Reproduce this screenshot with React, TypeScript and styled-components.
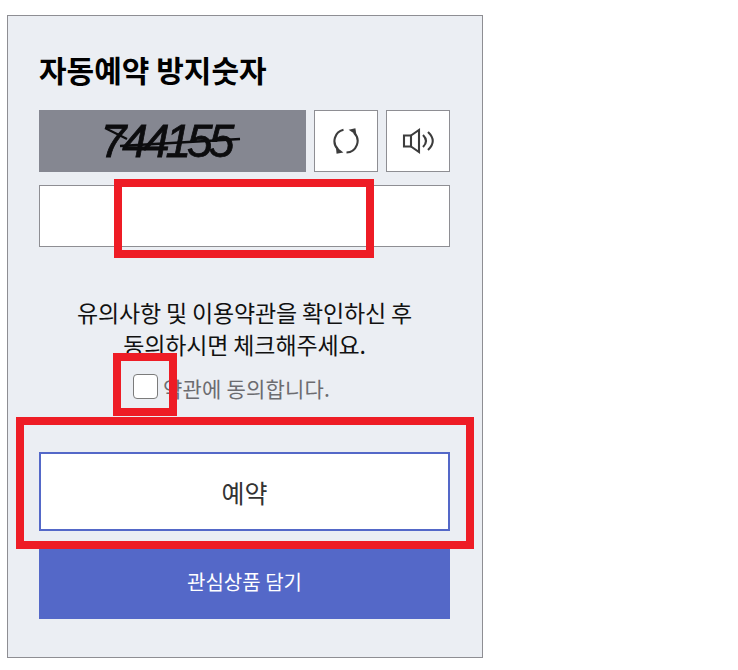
import React from 'react';
import styled, { createGlobalStyle } from 'styled-components';

const GlobalStyle = createGlobalStyle`
  html, body {
    margin: 0;
    padding: 0;
    background: #fff;
    font-family: "Noto Sans CJK KR", "Noto Sans", sans-serif;
  }
`;

const Page = styled.div`
  position: relative;
  width: 738px;
  height: 670px;
  padding: 15px 0 0 7px;
  box-sizing: border-box;
  overflow: hidden;
`;

const Panel = styled.section`
  width: 476px;
  height: 643px;
  box-sizing: border-box;
  padding: 29px 32px 0 31px;
  background: #ebeef3;
  border: 1px solid #8e8e93;
  display: flex;
  flex-direction: column;
`;

const Title = styled.h2`
  margin: 0;
  height: 48px;
  line-height: 48px;
  font-size: 30px;
  font-weight: 700;
  color: #000;
`;

const CaptchaRow = styled.div`
  display: flex;
  gap: 8px;
  margin-top: 17px;
  height: 62px;
`;

const CaptchaImage = styled.div`
  position: relative;
  width: 267px;
  background: #858791;
  display: flex;
  align-items: center;
  justify-content: center;
`;

const CaptchaDigits = styled.span`
  font-family: "Liberation Sans", sans-serif;
  font-style: italic;
  font-size: 46px;
  letter-spacing: -4px;
  line-height: 62px;
  color: #0c0c0e;
  -webkit-text-stroke: 0.8px #0c0c0e;
  filter: blur(0.5px);
  margin-right: 14px;
`;

const CaptchaStrikes = styled.svg`
  position: absolute;
  left: 0;
  top: 0;
`;

const IconButton = styled.button`
  width: 64px;
  padding: 0;
  box-sizing: border-box;
  background: #fff;
  border: 1px solid #8e8e93;
  display: flex;
  align-items: center;
  justify-content: center;
`;

const CodeInput = styled.input`
  display: block;
  width: 411px;
  height: 62px;
  margin-top: 13px;
  box-sizing: border-box;
  background: #fff;
  border: 1px solid #8e8e93;
`;

const Notice = styled.p`
  margin: 49px 0 0;
  font-size: 23px;
  line-height: 32px;
  text-align: center;
  color: #111;
  letter-spacing: -0.15px;
`;

const AgreeRow = styled.label`
  display: flex;
  align-items: center;
  justify-content: center;
  gap: 5px;
  height: 26px;
  margin-top: 13px;
  margin-right: 26px;
  font-size: 21px;
  letter-spacing: 0.2px;
  color: #6c6c70;
`;

const AgreeText = styled.span`
  margin-top: 3px;
`;

const AgreeBox = styled.span`
  width: 25px;
  height: 25px;
  box-sizing: border-box;
  background: #fff;
  border: 1px solid #7b7b7b;
  border-radius: 4px;
`;

const ReserveButton = styled.button`
  display: block;
  width: 411px;
  height: 79px;
  margin-top: 53px;
  padding: 0;
  box-sizing: border-box;
  background: #fff;
  border: 2px solid #5468c8;
  font-family: inherit;
  font-size: 25px;
  color: #333;
`;

const WishButton = styled.button`
  display: block;
  width: 411px;
  height: 70px;
  margin-top: 18px;
  padding: 0 0 5px;
  border: none;
  background: #5468c8;
  font-family: inherit;
  font-size: 20px;
  color: #fff;
`;

const Marker = styled.div<{ $left: number; $top: number; $width: number; $height: number }>`
  position: absolute;
  left: ${({ $left }) => $left}px;
  top: ${({ $top }) => $top}px;
  width: ${({ $width }) => $width}px;
  height: ${({ $height }) => $height}px;
  box-sizing: border-box;
  border: 8px solid #ee1c25;
`;

const RefreshIcon = () => (
  <svg width="28" height="28" viewBox="0 0 28 28" fill="none" stroke="#3c3c3c" strokeWidth="2.1">
    <path d="M11.5 2.8 A11.5 11.5 0 0 0 6 22.3" />
    <path d="M14.5 25.5 A11.5 11.5 0 0 0 22 5.7" />
    <path d="M3.8 19.5 L4.6 26.8 L11.4 25.4 Z" fill="#3c3c3c" stroke="none" />
    <path d="M24.4 8 L23.4 1.2 L16.6 2.8 Z" fill="#3c3c3c" stroke="none" />
  </svg>
);

const SpeakerIcon = () => (
  <svg width="32" height="28" viewBox="0 0 32 28" fill="none" stroke="#3c3c3c" strokeWidth="2.1">
    <path d="M2 8.5 H9 V19.5 H2 Z" />
    <path d="M9 8.5 L17 3 V25 L9 19.5" />
    <path d="M21 8 Q27 14 21 20" />
    <path d="M26 5 Q35.5 14 26 23" />
  </svg>
);

export default function App() {
  return (
    <Page>
      <GlobalStyle />
      <Panel>
        <Title>자동예약 방지숫자</Title>
        <CaptchaRow>
          <CaptchaImage>
            <CaptchaDigits>744155</CaptchaDigits>
            <CaptchaStrikes width="267" height="62" fill="none" stroke="#0c0c0e">
              <path d="M66 18 L88 29" strokeWidth="2.2" />
              <path d="M81 36 L201 29" strokeWidth="2.4" />
            </CaptchaStrikes>
          </CaptchaImage>
          <IconButton type="button" aria-label="새로고침">
            <RefreshIcon />
          </IconButton>
          <IconButton type="button" aria-label="음성 듣기">
            <SpeakerIcon />
          </IconButton>
        </CaptchaRow>
        <CodeInput type="text" />
        <Notice>
          유의사항 및 이용약관을 확인하신 후
          <br />
          동의하시면 체크해주세요.
        </Notice>
        <AgreeRow>
          <AgreeBox />
          <AgreeText>약관에 동의합니다.</AgreeText>
        </AgreeRow>
        <ReserveButton type="button">예약</ReserveButton>
        <WishButton type="button">관심상품 담기</WishButton>
      </Panel>
      <Marker $left={114} $top={179} $width={260} $height={79} />
      <Marker $left={113} $top={353} $width={64} $height={63} />
      <Marker $left={16} $top={417} $width={458} $height={132} />
    </Page>
  );
}
